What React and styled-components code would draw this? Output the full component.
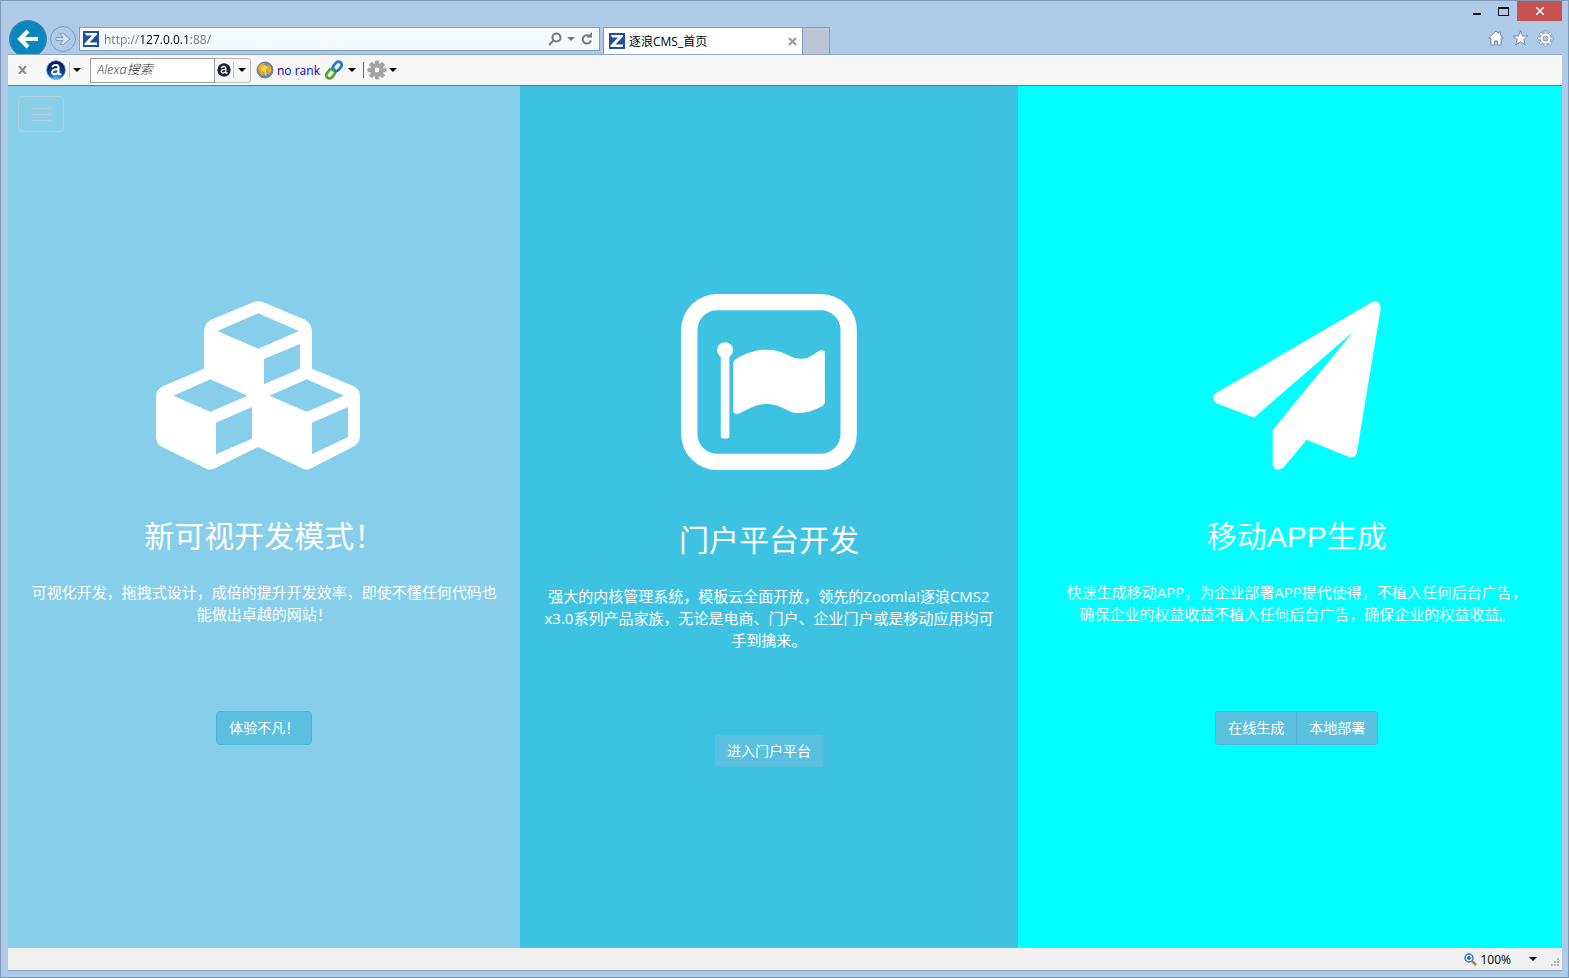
import React from "react";
import styled, { createGlobalStyle } from "styled-components";

const ui = '"Open Sans", "Noto Sans CJK SC", sans-serif';

const GlobalStyle = createGlobalStyle`
  *, *::before, *::after { box-sizing: border-box; }
  body { margin: 0; font-family: ${ui}; font-size: 12px; color: #000; }
  button, input { font: inherit; margin: 0; }
  svg { display: block; flex: none; }
`;

/* ---------- browser window ---------- */

const Window = styled.div`
  display: flex;
  flex-direction: column;
  min-height: 100vh;
  padding: 0 6px 6px 7px;
  background: #afcae6;
  border: 1px solid #8199b8;
`;

const TitleBar = styled.header`
  display: flex;
  align-items: flex-end;
  height: 53px;
  overflow: hidden;
`;

const BackButton = styled.button`
  display: grid;
  place-items: center;
  flex: none;
  align-self: flex-start;
  width: 38px;
  height: 38px;
  margin: 19px 3px 0 1px;
  padding: 0;
  border: 1px solid #4c7fa6;
  border-radius: 50%;
  background: #0b87c0;
`;

const ForwardButton = styled.button`
  display: grid;
  place-items: center;
  flex: none;
  width: 26px;
  height: 26px;
  margin: 0 3px 2px 0;
  padding: 0;
  border: 1px solid #7e99bb;
  border-radius: 50%;
  background: transparent;
`;

const AddressBar = styled.form`
  display: flex;
  align-items: center;
  flex: 0 1 521px;
  height: 24px;
  margin: 0 3px 3px 0;
  padding: 0 4px 0 3px;
  border: 1px solid #7f9dbf;
  background: #f5faff;
`;

const AddressInput = styled.input`
  flex: 1;
  min-width: 0;
  height: 20px;
  padding: 0 0 0 5px;
  border: 0;
  outline: 0;
  color: transparent;
  background: linear-gradient(90deg, #777 41px, #000 41px, #000 92px, #777 92px);
  background-clip: text;
`;

const IconButton = styled.button`
  display: grid;
  place-items: center;
  flex: none;
  width: ${(p) => p.$w || 16}px;
  height: ${(p) => p.$h || 20}px;
  padding: 0;
  border: 0;
  color: ${(p) => p.$color || "#000"};
  background: ${(p) => p.$bg || "transparent"};
`;

const Tab = styled.div`
  display: flex;
  align-items: center;
  gap: 4px;
  flex: 0 1 200px;
  height: 27px;
  padding: 0 2px 0 5px;
  border: 1px solid #7f9dbf;
  border-bottom: 0;
  background: #fff;
`;

const TabTitle = styled.span`
  flex: 1;
  white-space: nowrap;
  overflow: hidden;
`;

const NewTab = styled.button`
  flex: none;
  width: 27px;
  height: 27px;
  padding: 0;
  border: 1px solid #7f9dbf;
  border-width: 1px 1px 0 0;
  background: #bcc5d5;
`;

const WindowSide = styled.div`
  display: flex;
  flex-direction: column;
  align-items: flex-end;
  align-self: stretch;
  margin-left: auto;
`;

const Row = styled.div`
  display: flex;
  align-items: center;
  gap: ${(p) => p.$gap || 0}px;
  padding: ${(p) => p.$pad || 0};
`;

const Chrome = styled.div`
  display: flex;
  flex: 1;
  flex-direction: column;
  border: 1px solid #8ba6c6;
  border-width: 1px 0 1px 0;
`;

const Toolbar = styled.div`
  display: flex;
  align-items: center;
  height: 31px;
  padding-left: 6px;
  background: #f7f7f7;
  border-bottom: 1px solid #6f7b80;
`;

const Divider = styled.span`
  width: 1px;
  height: 16px;
  margin: ${(p) => p.$m || 0};
  background: ${(p) => p.$color || "#c4c4c4"};
`;

const SearchBox = styled.form`
  display: flex;
  align-items: center;
  height: 25px;
  margin: 0 5px 0 9px;
  border: 1px solid #b5b5b5;
  border-radius: 0 3px 3px 0;
`;

const SearchInput = styled.input`
  width: 125px;
  height: 25px;
  padding: 0 6px 2px;
  border: 1px solid #9a9a9a;
  outline: 0;
  background: #fff;
  font-size: 13px;
  font-style: italic;
  font-weight: 300;
  margin-left: -1px;
  &::placeholder { color: #333; opacity: 1; }
`;

const RankLink = styled.a`
  margin: 0 4px 0 3px;
  color: #0000c8;
  text-decoration: none;
  white-space: nowrap;
`;

const StatusBar = styled.footer`
  display: flex;
  align-items: center;
  justify-content: flex-end;
  height: 22px;
  padding-right: 2px;
  background: #f0f0f0;
`;

const ZoomButton = styled.button`
  display: flex;
  align-items: center;
  gap: 3px;
  padding: 0;
  border: 0;
  background: transparent;
`;

/* ---------- page content ---------- */

const Page = styled.main`
  position: relative;
  display: grid;
  grid-template-columns: 512fr 497fr 544fr;
  flex: 1;
`;

const MenuButton = styled.button`
  position: absolute;
  top: 10px;
  left: 10px;
  display: flex;
  flex-direction: column;
  align-items: center;
  justify-content: center;
  gap: 5px;
  width: 46px;
  height: 36px;
  padding: 0;
  border: 1px solid #b4cdd8;
  border-radius: 4px;
  background: transparent;
`;

const MenuLine = styled.span`
  width: 20px;
  height: 1px;
  background: #b4cdd8;
`;

const Panel = styled.section`
  display: flex;
  flex-direction: column;
  align-items: center;
  padding: 208px ${(p) => p.$right || 20}px 40px ${(p) => p.$left || 20}px;
  background: ${(p) => p.$bg};
  color: #fff;
  text-align: center;
`;

const Figure = styled.div`
  display: flex;
  align-items: flex-end;
  height: 176px;
  margin-bottom: ${(p) => (p.$roomy ? 54 : 50)}px;
  padding-right: ${(p) => p.$shift || 0}px;
`;

const Title = styled.h2`
  margin: 0 0 28px;
  font: 400 30px/33px "Liberation Sans", "Noto Sans CJK SC", sans-serif;
`;

const Copy = styled.p`
  margin: 0 0 ${(p) => (p.$roomy ? 84 : 86)}px;
  font-size: 15px;
  line-height: 22px;
`;

const ButtonGroup = styled.div`
  display: flex;
`;

const ActionButton = styled.button`
  height: ${(p) => (p.$flat ? 32 : 34)}px;
  padding: 0 12px;
  border: ${(p) => (p.$flat ? "0" : `1px solid ${p.$edge || "#46b8da"}`)};
  border-radius: ${(p) => (p.$flat ? 2 : 4)}px;
  background: ${(p) => p.$bg || "#5bc0de"};
  color: #fff;
  font-size: 14px;
  line-height: 20px;
  ${ButtonGroup} & { border-radius: 3px 0 0 3px; }
  ${ButtonGroup} & + & { margin-left: -1px; border-radius: 0 3px 3px 0; }
`;

/* ---------- drawings ---------- */

const Caret = ({ w = 8, color = "#000" }) => (
  <svg width={w} height={w / 2} viewBox="0 0 8 4"><path d="M0 0h8L4 4z" fill={color} /></svg>
);

const SiteIcon = () => (
  <svg width="16" height="16" viewBox="0 0 16 16">
    <path fill="#1f4fa0" d="M0 0h16v16H0z" />
    <path fill="#fff" d="M2 2h12v1.500L6.500 11.500H14V14H1.500v-1.500L9 4.500H3z" />
  </svg>
);

const AlexaIcon = ({ size, dark }) => (
  <svg width={size} height={size} viewBox="0 0 20 20">
    <defs>
      <radialGradient id="alexaGlow" cx=".5" cy=".95" r=".8">
        <stop offset="0" stopColor="#4cc0ff" />
        <stop offset=".5" stopColor="#0b4ba0" />
        <stop offset="1" stopColor="#0a1c50" />
      </radialGradient>
    </defs>
    <circle cx="10" cy="10" r="9.500" fill={dark ? "#1c2230" : "url(#alexaGlow)"} stroke={dark ? "none" : "#8eb3dc"} />
    <g fill="none" stroke="#fff" strokeLinecap="round">
      <path strokeWidth="2" d="M6.500 6.500C8 4.300 12.500 4.200 12.500 7.500V13.500q.3 1.200 2 .7" />
      <path strokeWidth="2" d="M12 9.200C8.500 9 6 10 6 12.300c0 2.700 4.500 2.700 6 .2" />
    </g>
  </svg>
);

const GearIcon = ({ size, fill, stroke, hole }) => (
  <svg width={size} height={size} viewBox="0 0 20 20">
    <g fill={fill} stroke={stroke} strokeWidth="1">
      {[0, 45, 90, 135].map((a) => (
        <rect key={a} x="8.300" y="1" width="3.400" height="18" rx=".6" transform={`rotate(${a} 10 10)`} />
      ))}
      <circle cx="10" cy="10" r="6.300" />
    </g>
    <circle cx="10" cy="10" r="5.800" fill={fill} />
    <circle cx="10" cy="10" r="3" fill={hole} stroke={stroke} />
  </svg>
);

const GlobeIcon = () => (
  <svg width="18" height="18" viewBox="0 0 18 18">
    <circle cx="9" cy="9" r="8" fill="#5c87b8" stroke="#7d7f86" />
    <path fill="#f3a522" d="M2 7C3 3 6 2 9 2l-1 3 2 2-3 2 1 4-2 2C4 13 3 11 2 7zM11 3c3 1 5 4 4.500 7L12 14l-1-3-1-3 2-2z" />
    <path fill="#f8d34c" d="M5 6l4-2 3 2-2 4 1 3-2 2-1-4-3-2z" />
  </svg>
);

const LinkIcon = () => (
  <svg width="20" height="20" viewBox="0 0 20 20" fill="none" strokeWidth="2.800">
    <rect x="-5" y="-3" width="10" height="6.500" rx="3" stroke="#55a52a" transform="translate(6.500 13.500) rotate(-50)" />
    <rect x="-5" y="-3.500" width="10" height="6.500" rx="3" stroke="#2578c8" transform="translate(13.500 6.500) rotate(-50)" />
    <path stroke="#55a52a" d="M8 11l3-3" strokeWidth="2" />
  </svg>
);

const CubesIcon = () => (
  <svg width="204" height="169" viewBox="78 62 612 507">
    <path fill="#fff" fillRule="evenodd" d="M370 66Q385 60 400 66L525 118Q546 130 546 155V265L672 318Q690 328 690 350V465Q690 488 672 498L545 563Q530 572 514 563L384 500L256 563Q240 572 225 563L96 500Q78 490 78 468V350Q78 328 98 318L222 265V155Q222 130 243 118ZM262 152L385 205L507 152L385 99ZM402 236V312L510 265V191ZM130 346L241 394L353 346L241 297ZM258 427V522L366 475V380ZM418 346L530 394L642 346L530 297ZM546 427V522L654 470V380Z" />
  </svg>
);

const FlagIcon = () => (
  <svg width="176" height="176" viewBox="93 43 528 529">
    <rect x="117.500" y="67.500" width="479" height="480" rx="84" fill="none" stroke="#fff" strokeWidth="49" />
    <circle cx="225" cy="212" r="24" fill="#fff" />
    <rect x="212" y="212" width="26" height="265" rx="7" fill="#fff" />
    <path fill="#fff" d="M249 252Q249 244 256 240C300 212 345 205 385 215C415 223 430 243 470 236C488 230 500 218 510 213Q525 209 525 222V368Q525 375 518 380C490 395 455 408 420 396C390 380 370 372 340 374C310 378 290 392 268 402Q250 408 249 392Z" />
  </svg>
);

const PlaneIcon = () => (
  <svg width="168" height="169" viewBox="97 63 504 507">
    <path fill="#fff" d="M573 67Q583 61 593 67Q602 74 600 86L529 516Q526 535 507 532L378 479L309 562Q300 571 288 569Q276 565 276 552V450L516 157L220 413L108 370Q97 365 97 352Q98 344 106 339Z" />
  </svg>
);

/* ---------- parts ---------- */

function Header() {
  return (
    <TitleBar>
      <BackButton aria-label="后退">
        <svg width="22" height="20" viewBox="0 0 22 20" fill="none" stroke="#fff" strokeWidth="4">
          <path d="M3 10h18M11 2L3 10l8 8" />
        </svg>
      </BackButton>
      <ForwardButton aria-label="前进">
        <svg width="16" height="14" viewBox="0 0 16 14">
          <path d="M1 5.500h7L5 1.500h3.500L15 7l-6.500 5.500H5l3-4H1z" fill="#d3e1f1" stroke="#7e99bb" />
        </svg>
      </ForwardButton>
      <AddressBar onSubmit={(e) => e.preventDefault()}>
        <SiteIcon />
        <AddressInput aria-label="地址" defaultValue="http://127.0.0.1:88/" />
        <IconButton type="button" aria-label="搜索">
          <svg width="14" height="14" viewBox="0 0 14 14" fill="none" stroke="#777" strokeWidth="2">
            <circle cx="8.500" cy="5.500" r="4" /><path d="M5.500 8.500L1 13" />
          </svg>
        </IconButton>
        <IconButton type="button" aria-label="搜索选项"><Caret w={8} color="#777" /></IconButton>
        <IconButton type="submit" aria-label="刷新">
          <svg width="12" height="14" viewBox="0 0 12 14" fill="none" stroke="#777" strokeWidth="2">
            <path d="M9 4.500A4.200 4.200 0 1 0 10 8.500" /><path d="M5.500 5.500H11V0z" fill="#777" stroke="none" />
          </svg>
        </IconButton>
      </AddressBar>
      <Tab>
        <SiteIcon />
        <TabTitle>逐浪CMS_首页</TabTitle>
        <IconButton aria-label="关闭标签页">
          <svg width="9" height="9" viewBox="0 0 9 9" stroke="#999" strokeWidth="2"><path d="M1 1l7 7M8 1L1 8" /></svg>
        </IconButton>
      </Tab>
      <NewTab aria-label="新建标签页" />
      <WindowSide>
        <Row>
          <IconButton $w={27} aria-label="最小化">
            <svg width="8" height="10" viewBox="0 0 8 10"><path d="M0 7h8v2H0z" fill="#111" /></svg>
          </IconButton>
          <IconButton $w={27} aria-label="最大化">
            <svg width="11" height="9" viewBox="0 0 11 9"><path d="M0 0h11v9H0zM1 2v6h9V2z" fillRule="evenodd" fill="#111" /></svg>
          </IconButton>
          <IconButton $w={45} $bg="#c75050" aria-label="关闭">
            <svg width="8" height="8" viewBox="0 0 8 8" stroke="#fff" strokeWidth="1.500"><path d="M0 0l8 8M8 0L0 8" /></svg>
          </IconButton>
        </Row>
        <Row $gap={8} $pad="7px 9px 0 0">
          <IconButton aria-label="主页">
            <svg width="16" height="16" viewBox="0 0 16 16"><path d="M8 1L.7 8H3v7h3.500v-4h3v4H13V8h2.300L12.500 5.300V2h-2v1.400z" fill="#fff" stroke="#7689a8" /></svg>
          </IconButton>
          <IconButton $w={17} aria-label="收藏夹">
            <svg width="17" height="16" viewBox="0 0 17 16"><path d="M8.500.8l2 5.200H16l-4.300 3.500 1.600 5.500-4.800-3.300L3.700 15l1.600-5.500L1 6h5.500z" fill="#fff" stroke="#7689a8" /></svg>
          </IconButton>
          <IconButton aria-label="工具">
            <GearIcon size={17} fill="#fff" stroke="#7689a8" hole="#afcae6" />
          </IconButton>
        </Row>
      </WindowSide>
    </TitleBar>
  );
}

function AlexaToolbar() {
  return (
    <Toolbar>
      <IconButton aria-label="关闭工具栏">
        <svg width="9" height="8" viewBox="0 0 9 8" stroke="#888" strokeWidth="2"><path d="M1 0l7 8M8 0L1 8" /></svg>
      </IconButton>
      <Row $gap={3} $pad="0 0 0 16px">
        <IconButton $w={20} aria-label="Alexa"><AlexaIcon size={20} /></IconButton>
        <Divider />
        <IconButton $w={8} aria-label="Alexa 菜单"><Caret /></IconButton>
      </Row>
      <SearchBox onSubmit={(e) => e.preventDefault()}>
        <SearchInput aria-label="Alexa搜索" placeholder="Alexa搜索" />
        <IconButton $w={18} aria-label="搜索"><AlexaIcon size={14} dark /></IconButton>
        <Divider />
        <IconButton type="button" aria-label="搜索菜单"><Caret /></IconButton>
      </SearchBox>
      <GlobeIcon />
      <RankLink href="#rank">no rank</RankLink>
      <LinkIcon />
      <IconButton $w={16} aria-label="链接菜单"><Caret /></IconButton>
      <Divider $m="0 3px" $color="#666" />
      <IconButton $w={20} aria-label="设置"><GearIcon size={20} fill="#a3a3a3" stroke="#a3a3a3" hole="#f7f7f7" /></IconButton>
      <IconButton $w={12} aria-label="设置菜单"><Caret /></IconButton>
    </Toolbar>
  );
}

export default function App() {
  return (
    <Window>
      <GlobalStyle />
      <Header />
      <Chrome>
        <AlexaToolbar />
        <Page>
          <Panel $bg="#87ceeb">
            <Figure $shift={12}><CubesIcon /></Figure>
            <Title>新可视开发模式！</Title>
            <Copy>可视化开发，拖拽式设计，成倍的提升开发效率，即使不懂任何代码也能做出卓越的网站！</Copy>
            <ActionButton>体验不凡！</ActionButton>
          </Panel>
          <Panel $bg="#3dc3e1">
            <Figure $roomy><FlagIcon /></Figure>
            <Title>门户平台开发</Title>
            <Copy $roomy>强大的内核管理系统，模板云全面开放，领先的Zoomla!逐浪CMS2 x3.0系列产品家族，无论是电商、门户、企业门户或是移动应用均可手到擒来。</Copy>
            <ActionButton $flat $bg="#5bbfdf">进入门户平台</ActionButton>
          </Panel>
          <Panel $bg="#00ffff" $left={44} $right={30}>
            <Figure><PlaneIcon /></Figure>
            <Title>移动APP生成</Title>
            <Copy>快速生成移动APP，为企业部署APP提代使得，不植入任何后台广告，确保企业的权益收益不植入任何后台广告，确保企业的权益收益。</Copy>
            <ButtonGroup>
              <ActionButton $edge="#50b2d6">在线生成</ActionButton>
              <ActionButton $edge="#50b2d6">本地部署</ActionButton>
            </ButtonGroup>
          </Panel>
          <MenuButton aria-label="菜单"><MenuLine /><MenuLine /><MenuLine /></MenuButton>
        </Page>
        <StatusBar>
          <ZoomButton>
            <svg width="13" height="13" viewBox="0 0 13 13">
              <path d="M8 8l4 4" stroke="#b9803f" strokeWidth="2.500" />
              <circle cx="5" cy="5" r="4" fill="#dcecfb" stroke="#3c74bd" strokeWidth="1.500" />
              <path d="M3 5h4M5 3v4" stroke="#1d5cb0" strokeWidth="1.500" />
            </svg>
            100%
          </ZoomButton>
          <Row $pad="0 14px 0 18px"><IconButton $w={8} aria-label="缩放级别"><Caret /></IconButton></Row>
          <svg width="9" height="18" viewBox="0 0 9 18" fill="#b8b8b8">
            <path d="M6 8h2v2H6zM3 11h2v2H3zM6 11h2v2H6zM0 14h2v2H0zM3 14h2v2H3zM6 14h2v2H6z" />
          </svg>
        </StatusBar>
      </Chrome>
    </Window>
  );
}
